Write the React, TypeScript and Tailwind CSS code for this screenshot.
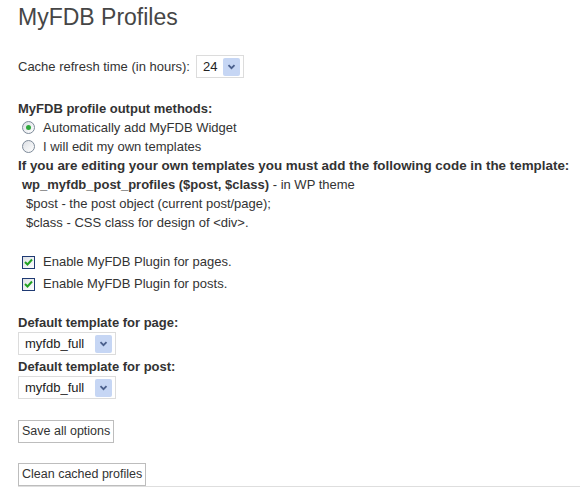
import React from 'react';

const font = { fontFamily: '"Liberation Sans", Arial, sans-serif' };

function FakeSelect({ value, width }: { value: string; width: string }) {
  return (
    <div className={`flex h-[23px] items-center justify-between border border-[#dcdcdc] bg-white pl-[6px] pr-[3px] ${width}`}>
      <span className="text-[13px] text-[#222]">{value}</span>
      <span className="flex h-[18px] w-[17px] items-center justify-center rounded-[2px] bg-[#c6d6f4]">
        <svg width="9" height="6" viewBox="0 0 9 6">
          <path d="M1.5 1.2 L4.5 4.2 L7.5 1.2" fill="none" stroke="#4a5f8c" strokeWidth="1.8" />
        </svg>
      </span>
    </div>
  );
}

function Radio({ checked, label }: { checked?: boolean; label: string }) {
  return (
    <div className="flex h-[19px] items-center pl-[4px]">
      <span className="flex h-[13px] w-[13px] items-center justify-center rounded-full border border-[#7d8a99] bg-gradient-to-br from-[#dcdfe4] to-white">
        {checked && <span className="h-[5px] w-[5px] rounded-full bg-[#2fa83c]" />}
      </span>
      <span className="ml-[8px]">{label}</span>
    </div>
  );
}

function Check({ label }: { label: string }) {
  return (
    <div className="flex h-[22px] items-center pl-[4px]">
      <span className="flex h-[13px] w-[13px] items-center justify-center border border-[#1f3a73] bg-gradient-to-br from-[#dde1e6] to-white">
        <svg width="9" height="8" viewBox="0 0 9 8">
          <path d="M1 4 L3.5 6.5 L8 1.5" fill="none" stroke="#21a121" strokeWidth="2" />
        </svg>
      </span>
      <span className="ml-[8px]">{label}</span>
    </div>
  );
}

function Button({ children }: { children: React.ReactNode }) {
  return (
    <button
      type="button"
      className="h-[23px] border border-[#bdbdbd] bg-white px-[3px] text-[12.5px] text-[#333]"
      style={font}
    >
      {children}
    </button>
  );
}

export default function App() {
  return (
    <div className="min-h-[492px] w-[580px] bg-white pl-[18px] text-[13px] text-[#333]" style={font}>
      <h2 className="pt-[3px] text-[23px] leading-[29px] text-[#464646]">MyFDB Profiles</h2>

      <div className="mt-[23px] flex items-center">
        <span>Cache refresh time (in hours):</span>
        <div className="ml-[6px]">
          <FakeSelect value="24" width="w-[48px]" />
        </div>
      </div>

      <div className="mt-[21px] font-bold leading-[19px]">MyFDB profile output methods:</div>
      <Radio checked label="Automatically add MyFDB Widget" />
      <Radio label="I will edit my own templates" />
      <div className="leading-[19px]">
        <div className="text-[13.4px] font-bold">
          If you are editing your own templates you must add the following code in the template:
        </div>
        <div className="pl-[4px]">
          <span className="font-bold">wp_myfdb_post_profiles ($post, $class)</span> - in WP theme
        </div>
        <div className="pl-[8px]">$post - the post object (current post/page);</div>
        <div className="pl-[8px]">$class - CSS class for design of &lt;div&gt;.</div>
      </div>

      <div className="mt-[19px]">
        <Check label="Enable MyFDB Plugin for pages." />
        <Check label="Enable MyFDB Plugin for posts." />
      </div>

      <div className="mt-[18px] font-bold leading-[19px]">Default template for page:</div>
      <FakeSelect value="myfdb_full" width="w-[98px]" />
      <div className="mt-[2px] font-bold leading-[19px]">Default template for post:</div>
      <FakeSelect value="myfdb_full" width="w-[98px]" />

      <div className="mt-[21px]">
        <Button>Save all options</Button>
      </div>

      <div className="mt-[20px] flex items-end border-b border-[#dedede]">
        <Button>Clean cached profiles</Button>
      </div>
    </div>
  );
}
